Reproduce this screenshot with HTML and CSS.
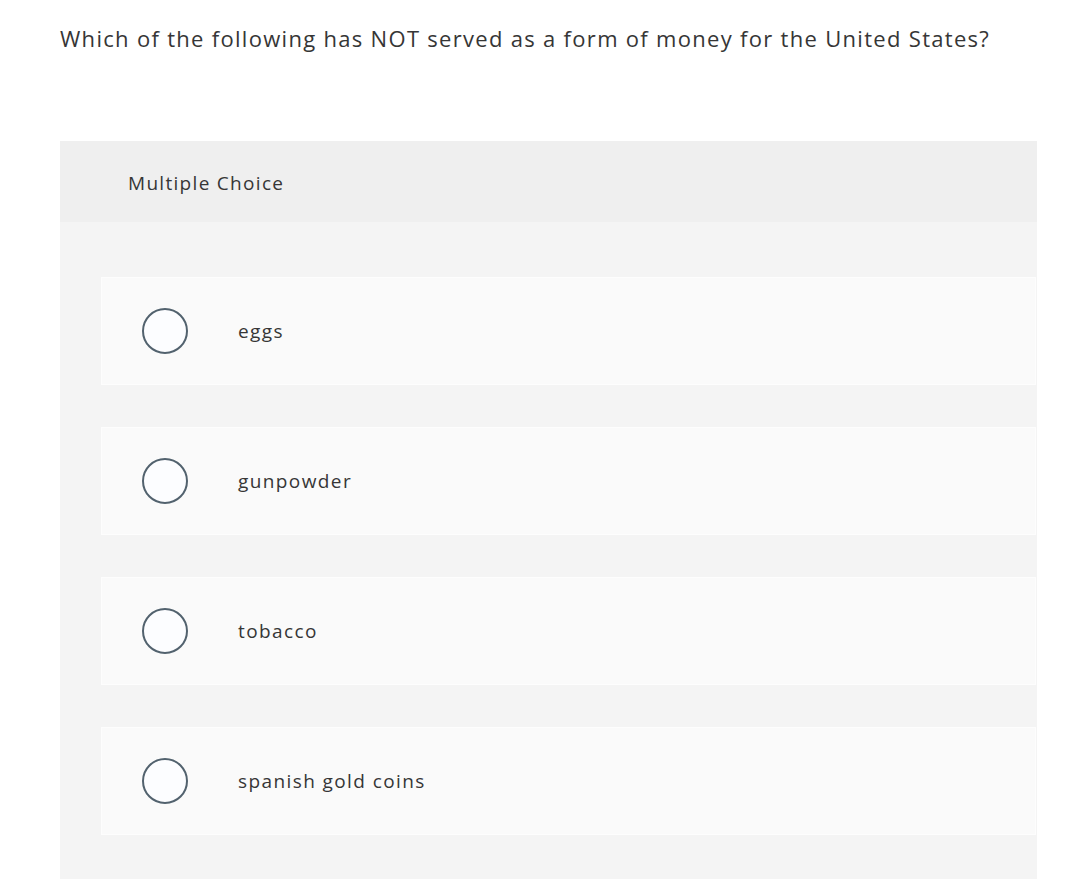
FILE: index.html
```html
<!DOCTYPE html>
<html>
<head>
<meta charset="utf-8">
<link rel="stylesheet" href="styles.css">
</head>
<body>
<p class="question">Which of the following has NOT served as a form of money for the United States?</p>
<div class="panel">
  <div class="panel-header">Multiple Choice</div>
  <div class="panel-body">
    <div class="option"><span class="radio"></span><span class="label">eggs</span></div>
    <div class="option"><span class="radio"></span><span class="label">gunpowder</span></div>
    <div class="option"><span class="radio"></span><span class="label">tobacco</span></div>
    <div class="option"><span class="radio"></span><span class="label">spanish gold coins</span></div>
  </div>
</div>
</body>
</html>
```
FILE: styles.css
```css
html, body {
  margin: 0;
  padding: 0;
  background: #ffffff;
  font-family: "Open Sans", "Liberation Sans", sans-serif;
  color: #333333;
  height: 879px;
  overflow: hidden;
}
.question {
  margin: 0;
  padding: 23px 0 0 60px;
  font-size: 22px;
  line-height: 30px;
  letter-spacing: 1.3px;
  color: #363636;
}
.panel {
  margin: 88px 0 0 60px;
  width: 977px;
}
.panel-header {
  height: 81px;
  background: #efefef;
  padding-left: 68px;
  box-sizing: border-box;
  display: flex;
  align-items: center;
  padding-top: 2px;
  font-size: 19px;
  letter-spacing: 1.3px;
  color: #363636;
}
.panel-body {
  background: #f4f4f4;
  padding: 55px 1px 60px 41px;
  display: flex;
  flex-direction: column;
  gap: 42px;
}
.option {
  height: 108px;
  background: #fafafa;
  border: 1px solid #fdfdfd;
  box-sizing: border-box;
  display: flex;
  align-items: center;
  padding-left: 40px;
  gap: 50px;
}
.radio {
  width: 46px;
  height: 46px;
  border: 2px solid #52626e;
  border-radius: 50%;
  box-sizing: border-box;
  background: #fcfdff;
  flex: none;
}
.label {
  font-size: 19px;
  letter-spacing: 1.4px;
  color: #363636;
}
```
